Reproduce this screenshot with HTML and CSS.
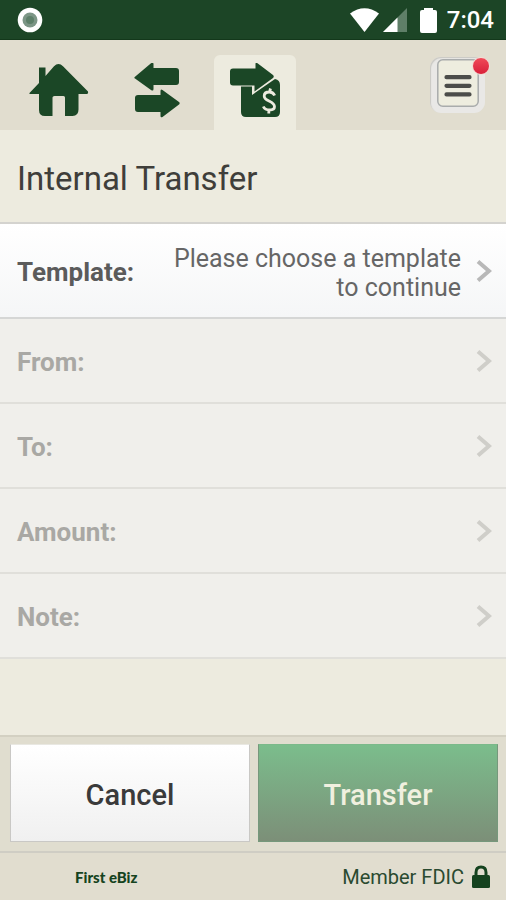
FILE: index.html
```html
<!DOCTYPE html>
<html lang="en">
<head>
<meta charset="utf-8">
<meta name="viewport" content="width=device-width, initial-scale=1">
<title>Internal Transfer</title>
<link rel="stylesheet" href="styles.css">
</head>
<body>
<div class="status">
  <svg class="status-dot" width="26" height="26" viewBox="0 0 26 26" aria-hidden="true"><circle cx="13" cy="13" r="12.3" fill="#fff"/><circle cx="13" cy="13" r="7.5" fill="#7c9686"/><circle cx="13" cy="13" r="4" fill="#5d8069"/></svg>
  <div class="status-right">
    <svg width="29" height="24" viewBox="0 0 29 24" aria-hidden="true"><path d="M0 5.5Q14.500-5 29 5.500L14.500 24Z" fill="#fff"/></svg>
    <svg width="24" height="24" viewBox="0 0 24 24" aria-hidden="true"><path d="M0 24 24 0V24Z" fill="#5f7f68"/><path d="M0 24 14.500 9.500V24Z" fill="#fff"/></svg>
    <svg class="battery" width="17" height="25" viewBox="0 0 17 25" aria-hidden="true"><path d="M4 0h9v2H15q2 0 2 2v19q0 2-2 2H2q-2 0-2-2V4q0-2 2-2h2Z" fill="#fff"/></svg>
    <span class="clock">7:04</span>
  </div>
</div>
<header class="nav">
  <nav class="tabs">
    <a class="tab" href="#home" aria-label="Home">
      <svg width="60" height="54" viewBox="0 0 60 54"><path d="M.5 30 10 20V4.500H16.500V13L25 3.200Q29.500 -1 34 3.200L59 28.500Q59.500 31 57.500 31H49.500V46.500Q49.500 53 43.500 53H36V34.500Q36 33 34.500 33H25.500Q23.500 33 23.500 34.500V53H16Q10 53 10 47V31H1.500Q0 31 .5 30Z"/></svg>
    </a>
    <a class="tab" href="#activity" aria-label="Activity">
      <svg width="46" height="56" viewBox="0 0 46 56"><path d="M1 13.800 17 .2Q19.500 -1 19.500 1V5H42Q45 5 45 8V19Q45 22 42 22H19.500V26Q19.500 28.500 17 27L1 15.500Q-.3 14.600 1 13.800ZM45 41.500 28.500 54Q26.500 55 26.500 53V49H4Q1 49 1 46V35Q1 32 4 32H26.500V28Q26.500 25.500 28.500 27L45 39Q46.300 40.200 45 41.500Z"/></svg>
    </a>
    <a class="tab tab-active" href="#transfer" aria-label="Internal transfer" aria-current="page">
      <svg width="50" height="56" viewBox="0 0 50 56"><path d="M11 22H22V32L45 16Q50 17 50 22V49Q50 54 45 54H16Q11 54 11 49Z"/><path class="tab-outline" d="M3 5.500H25.500V.5Q26-1 27.500 .3L43 12Q44.500 13.500 43 15L24.500 28.500V22.500H3Q0 22.500 0 19.500V8.500Q0 5.500 3 5.500Z"/><path class="coin" d="M44.700 32.500Q43 29 39.300 29Q34.200 29 34.200 33Q34.200 36 39 38Q44.500 40.500 44.500 43.800Q44.500 47 39.500 47Q35 47 33.300 43.500M40.500 25.500 39.500 29M38.800 47V50.500"/></svg>
    </a>
  </nav>
  <button class="menu" type="button" aria-label="Menu">
    <svg width="42" height="48" viewBox="0 0 42 48"><rect x=".8" y=".8" width="40.400" height="46.400" rx="5" fill="#eeeddf" stroke="#a9acac" stroke-width="1.500"/><path d="M9.500 18.200H32.500M9.500 26.800H32.500M9.500 35.400H32.500" stroke="#4c4d4a" stroke-width="4.200" stroke-linecap="round"/></svg>
    <span class="badge"></span>
  </button>
</header>
<main>
  <h1>Internal Transfer</h1>
  <div class="rows">
    <button class="row row-open" type="button"><span class="label">Template:</span><span class="value">Please choose a template to continue</span><svg class="chevron" width="16" height="24" viewBox="0 0 16 24"><path d="M2 2.500 13 12 2 21.500"/></svg></button>
    <button class="row" type="button" disabled><span class="label">From:</span><svg class="chevron" width="16" height="24" viewBox="0 0 16 24"><path d="M2 2.500 13 12 2 21.500"/></svg></button>
    <button class="row" type="button" disabled><span class="label">To:</span><svg class="chevron" width="16" height="24" viewBox="0 0 16 24"><path d="M2 2.500 13 12 2 21.500"/></svg></button>
    <button class="row" type="button" disabled><span class="label">Amount:</span><svg class="chevron" width="16" height="24" viewBox="0 0 16 24"><path d="M2 2.500 13 12 2 21.500"/></svg></button>
    <button class="row" type="button" disabled><span class="label">Note:</span><svg class="chevron" width="16" height="24" viewBox="0 0 16 24"><path d="M2 2.500 13 12 2 21.500"/></svg></button>
  </div>
</main>
<div class="actions">
  <button class="action cancel" type="button">Cancel</button>
  <button class="action transfer" type="button">Transfer</button>
</div>
<footer class="footer">
  <strong class="brand">First eBiz</strong>
  <span class="member">Member FDIC <svg width="18" height="23" viewBox="0 0 18 23" aria-hidden="true"><path d="M4 11V7.500Q4 2 9 2T14 7.500V11" fill="none" stroke="#15431f" stroke-width="3"/><rect y="10" width="18" height="13" rx="1.500" fill="#15431f"/></svg></span>
</footer>
</body>
</html>
```
FILE: styles.css
```css
* { box-sizing: border-box; }

body {
  margin: 0;
  min-height: 100vh;
  display: flex;
  flex-direction: column;
  background: #edebdf;
  color: #3f3e3a;
  font-family: Roboto, "Liberation Sans", sans-serif;
}

button { font: inherit; border: 0; margin: 0; }
svg { display: block; flex: none; }

.status {
  display: flex;
  justify-content: space-between;
  align-items: center;
  height: 40px;
  padding: 1px 12px 0 17px;
  background: #1c4526;
  border-bottom: 1px solid #13381b;
}
.status-right { display: flex; align-items: center; gap: 4px; }
.battery { margin: 0 6px 0 9px; }
.clock { color: #fff; font-size: 24px; line-height: 28px; font-weight: 500; }

.nav {
  display: flex;
  justify-content: space-between;
  align-items: flex-end;
  height: 90px;
  padding: 0 21px 0 18px;
  background: #e1ddcf;
}
.tabs { display: flex; gap: 16px; }
.tab {
  display: flex;
  justify-content: center;
  width: 82px;
  height: 75px;
  padding-top: 8px;
  border-radius: 6px 6px 0 0;
  fill: #1b4726;
}
.tab-active { background: #edebdf; }
.tab-outline { stroke: #edebdf; stroke-width: 2; paint-order: stroke; }
.coin { fill: none; stroke: #edebdf; stroke-width: 2.8; }

.menu {
  position: relative;
  display: flex;
  justify-content: center;
  width: 55px;
  height: 56px;
  margin-bottom: 17px;
  padding: 2px 0 0;
  border-radius: 11px;
  background: #e9e8e6;
  box-shadow: inset 1px 1px 1px #c9c8c3;
}
.badge {
  position: absolute;
  top: 0;
  right: -5px;
  width: 18px;
  height: 18px;
  border: 1px solid #f5dcd5;
  border-radius: 50%;
  background: linear-gradient(#f04a58, #d9203a);
}

h1 {
  margin: 0;
  padding: 29px 17px 23px;
  font-size: 33px;
  line-height: 40px;
  font-weight: 400;
}

.rows { border-top: 2px solid #d4d3cf; }
.row {
  display: flex;
  align-items: center;
  justify-content: space-between;
  width: 100%;
  min-height: 85px;
  padding: 0 14px 0 17px;
  border-bottom: 2px solid #e0dfda;
  background: #f0efeb;
  color: #a9a8a4;
  font-size: 26px;
  line-height: 29px;
  text-align: left;
}
.row-open {
  min-height: 95px;
  border-color: #d5d6d5;
  background: linear-gradient(#fff, #f5f6f7);
  color: #5b5b5b;
}
.label, .value { padding-top: 4px; }
.label { font-weight: 700; }
.value {
  width: 300px;
  margin: 0 15px 0 auto;
  color: #666;
  font-size: 25px;
  text-align: right;
}
.chevron { fill: none; stroke: #cfcec9; stroke-width: 4; }
.row-open .chevron { stroke: #b8b8b8; }

.actions {
  display: grid;
  grid-template-columns: 1fr 1fr;
  gap: 8px;
  margin-top: auto;
  padding: 7px 8px 9px 10px;
  border-top: 2px solid #d3d0c2;
  background: #e0ddcf;
}
.action {
  height: 98px;
  padding: 4px 6px 0;
  font-size: 29px;
  line-height: 36px;
  font-weight: 500;
}
.cancel {
  background: linear-gradient(#fff, #f0f0f0);
  border: 1px solid #c9c8c5;
  border-top-color: #e9e8e2;
  color: #3a3a3a;
}
.transfer {
  background: linear-gradient(#7bbd8c, #7c8f78);
  border: 1px solid #76987c;
  border-top-color: #7bb98a;
  color: #f0f0df;
}

.footer {
  display: flex;
  justify-content: space-between;
  align-items: center;
  height: 49px;
  padding: 0 16px 0 75px;
  border-top: 2px solid #cfcdc4;
  background: #e1ddcf;
  color: #2a4a30;
}
.brand { color: #154320; font: 900 15px/20px Lato, sans-serif; }
.member { display: flex; align-items: center; gap: 8px; font-size: 20px; line-height: 24px; }
```
